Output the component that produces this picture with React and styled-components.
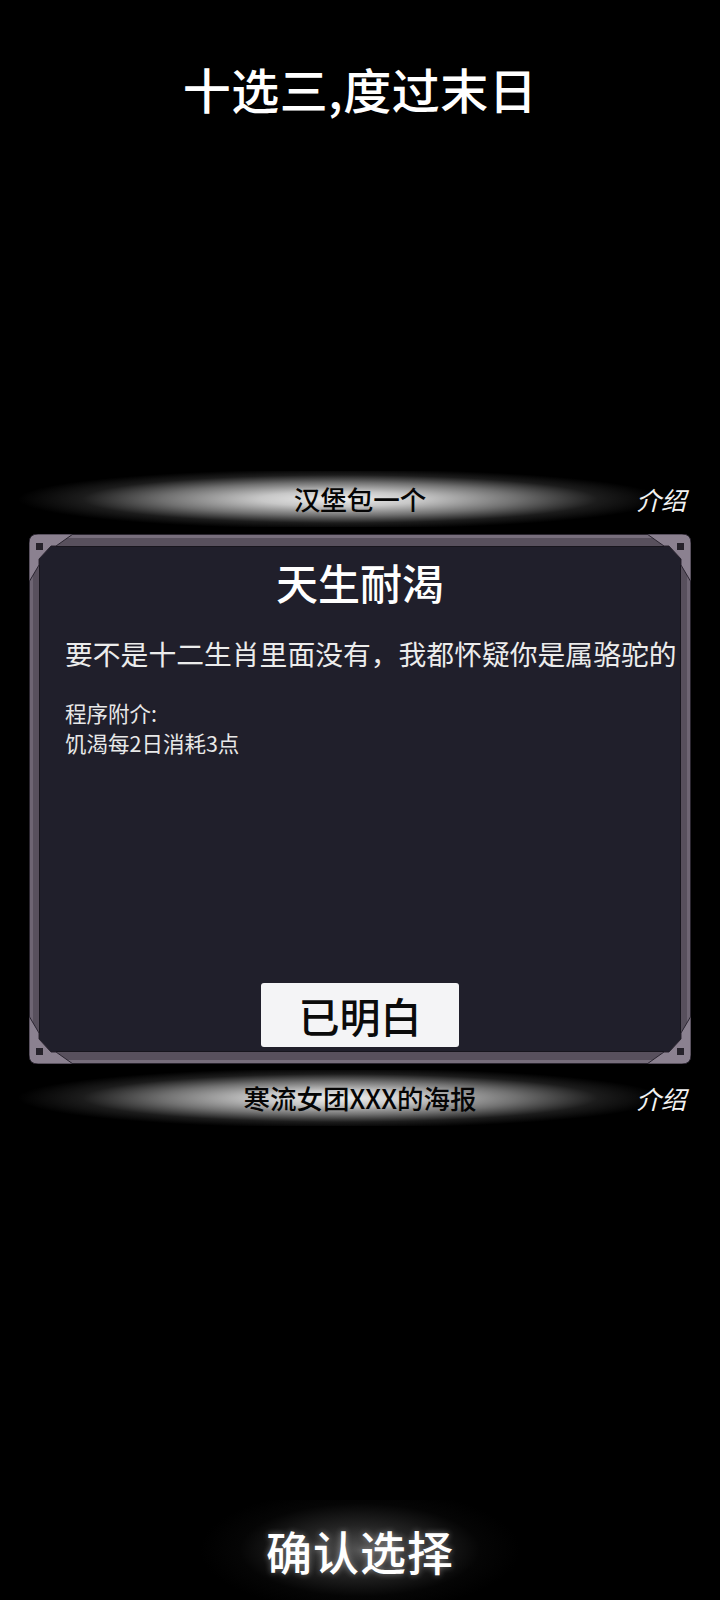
import React from 'react';
import styled, { createGlobalStyle } from 'styled-components';

const GlobalStyle = createGlobalStyle`
  html, body {
    margin: 0;
    padding: 0;
    background: #000;
  }
  body {
    font-family: "Noto Sans CJK SC", "Noto Sans", sans-serif;
    color: #fff;
  }
`;

const Page = styled.div`
  width: 720px;
  height: 1600px;
  display: flex;
  flex-direction: column;
  align-items: stretch;
  background: #000;
  overflow: hidden;
`;

const Heading = styled.h1`
  margin: 60px 0 0;
  font-size: 48px;
  line-height: 56px;
  font-weight: 500;
  text-align: center;
  letter-spacing: 0.5px;
  color: #fff;
`;

// glowing strip that carries an item name
const ItemRow = styled.div`
  margin-top: ${(p) => p.$gap}px;
  height: 56px;
  display: grid;
  grid-template-columns: 1fr auto 1fr;
  align-items: center;
  background: radial-gradient(
    ellipse 322px 30px at 340px 50%,
    rgba(238, 238, 238, 1) 0%,
    rgba(210, 210, 210, 0.95) 25%,
    rgba(150, 150, 150, 0.75) 55%,
    rgba(70, 70, 70, 0.4) 80%,
    rgba(0, 0, 0, 0) 100%
  );
`;

const ItemName = styled.span`
  grid-column: 2;
  font-size: 26.5px;
  line-height: 1;
  font-weight: 500;
  color: #050505;
`;

const InfoLink = styled.span`
  grid-column: 3;
  justify-self: end;
  padding-right: 34px;
  font-size: 25px;
  font-style: italic;
  color: #f2f2f2;
`;

const Frame = styled.div`
  position: relative;
  margin: 7px 29px 0;
  height: 530px;
  box-sizing: border-box;
  padding: 12px 10px 12px 10px;
  border-radius: 9px;
  background: #58505d;
  box-shadow:
    inset 0 0 0 1px #2b2630,
    inset 0 3px 0 1px #776e7c,
    inset 0 -3px 0 1px #776e7c,
    inset 3px 0 0 1px #6e6573,
    inset -3px 0 0 1px #6e6573;
`;

const Board = styled.div`
  height: 100%;
  box-sizing: border-box;
  display: flex;
  flex-direction: column;
  padding: 10px 0 4px 25px;
  background: #201f2b;
  border: 1px solid #17151d;
  border-radius: 3px;
`;

const CornerSvg = styled.svg`
  position: absolute;
  width: 48px;
  height: 48px;
  ${(p) => (p.$right ? 'right: 0;' : 'left: 0;')}
  ${(p) => (p.$bottom ? 'bottom: 0;' : 'top: 0;')}
  transform: scale(${(p) => (p.$right ? -1 : 1)}, ${(p) => (p.$bottom ? -1 : 1)});
`;

const Corner = ({ right, bottom }) => (
  <CornerSvg viewBox="0 0 48 48" $right={right} $bottom={bottom}>
    <path
      d="M0 48 L0 9 Q0 0 9 0 L44 0 L27 12 L22 12 L10 25 L10 31 Z"
      fill="#8b8190"
      stroke="#2a2530"
      strokeWidth="1"
    />
    <rect x="7" y="9" width="7" height="7" fill="#26222b" />
  </CornerSvg>
);

const CardTitle = styled.h2`
  margin: 0 25px 0 0;
  font-size: 42px;
  line-height: 50px;
  font-weight: 500;
  text-align: center;
  color: #fff;
`;

const Quote = styled.p`
  margin: 28px 0 0;
  font-size: 27.8px;
  line-height: 36px;
  white-space: nowrap;
  color: #ececec;
`;

const Note = styled.p`
  margin: ${(p) => (p.$first ? 27 : 0)}px 0 0;
  font-size: 21.5px;
  line-height: 30px;
  color: #e8e8e8;
`;

const OkButton = styled.button`
  margin: auto 0 0 196px;
  width: 198px;
  height: 64px;
  border: none;
  border-radius: 3px;
  background: #f4f4f6;
  font-family: inherit;
  font-size: 41px;
  font-weight: 500;
  color: #0b0b0b;
  padding: 0;
`;

const Confirm = styled.div`
  margin-top: 374px;
  height: 100px;
  display: flex;
  align-items: center;
  justify-content: center;
  background: radial-gradient(
    ellipse 160px 62px at 50% 50%,
    rgba(120, 120, 120, 0.7) 0%,
    rgba(70, 70, 70, 0.5) 40%,
    rgba(25, 25, 25, 0.2) 75%,
    rgba(0, 0, 0, 0) 100%
  );
  font-size: 46px;
  font-weight: 500;
  color: #fff;
  text-shadow: 0 0 6px rgba(255, 255, 255, 0.4);
  letter-spacing: 1px;
`;

export default function App() {
  return (
    <>
      <GlobalStyle />
      <Page>
        <Heading>十选三,度过末日</Heading>

        <ItemRow $gap={355}>
          <ItemName>汉堡包一个</ItemName>
          <InfoLink>介绍</InfoLink>
        </ItemRow>

        <Frame>
          <Board>
            <CardTitle>天生耐渴</CardTitle>
            <Quote>要不是十二生肖里面没有，我都怀疑你是属骆驼的</Quote>
            <Note $first>程序附介:</Note>
            <Note>饥渴每2日消耗3点</Note>
            <OkButton>已明白</OkButton>
          </Board>
          <Corner />
          <Corner right />
          <Corner bottom />
          <Corner right bottom />
        </Frame>

        <ItemRow $gap={6}>
          <ItemName>寒流女团XXX的海报</ItemName>
          <InfoLink>介绍</InfoLink>
        </ItemRow>

        <Confirm>确认选择</Confirm>
      </Page>
    </>
  );
}
